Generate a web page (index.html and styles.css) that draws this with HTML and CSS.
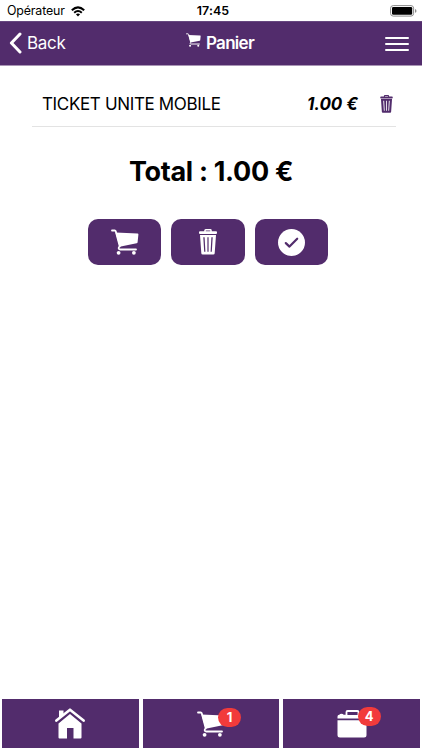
FILE: index.html
```
<!DOCTYPE html>
<html lang="fr">
<head>
<meta charset="utf-8">
<title>Panier</title>
<link rel="stylesheet" href="styles.css">
</head>
<body>
<svg class="defs" aria-hidden="true">
  <symbol id="cart" viewBox="0 0 28 26">
    <path d="M1 1.500h2.700c.6 0 .9.3 1.100.9L8.800 17.500c-1.600.6-1.600 3 .4 3H25" fill="none" stroke="currentColor" stroke-width="1.800" stroke-linecap="round" stroke-linejoin="round"/>
    <path d="M4.500 3.500 26.600 4.600Q27.500 4.700 27.400 5.600L26.600 13.200Q26.500 14.100 25.600 14.300L8.600 17.700Z" fill="currentColor"/>
    <circle cx="7.600" cy="23.800" r="1.900" fill="currentColor"/>
    <circle cx="22.900" cy="23.800" r="1.900" fill="currentColor"/>
  </symbol>
  <symbol id="trash" viewBox="0 0 18 26">
    <path d="M6 3V1.500Q6 .8 6.700.8h4.600q.7 0 .7.700V3" fill="none" stroke="currentColor" stroke-width="1.500"/>
    <rect x="0" y="2.300" width="18" height="2.700" rx="1" fill="currentColor"/>
    <path fill-rule="evenodd" fill="currentColor" d="M1 5.900h16l-1.300 18.300q-.1 1.300-1.400 1.300H3.700q-1.300 0-1.400-1.300ZM4.300 8.300l.9 14.500h1.200L5.600 8.300ZM8.400 8.300v14.500h1.200V8.300ZM12.400 8.300l-.8 14.500h1.200l.9-14.500Z"/>
  </symbol>
</svg>
<div class="screen">
  <div class="status">
    <div class="carrier">
      <span>Opérateur</span>
      <svg class="wifi" viewBox="0 0 14 11">
        <g fill="none" stroke="#000" stroke-width="2">
          <path d="M.8 4.300Q7-1.600 13.200 4.300"/>
          <path d="M3.200 6.800Q7 3.300 10.800 6.800"/>
        </g>
        <path d="M4.900 8.300Q7 6.600 9.100 8.300L7 10.500Z"/>
      </svg>
    </div>
    <div class="clock">17:45</div>
    <svg class="battery" viewBox="0 0 27 12">
      <rect x=".6" y=".6" width="23" height="10.500" rx="2.600" fill="#fff" stroke="#8b8b8b" stroke-width="1"/>
      <rect x="2" y="2" width="20.200" height="7.700" rx="1.300"/>
      <path d="M25 4q1.500.4 1.500 1.900T25 7.800Z" fill="#8b8b8b"/>
    </svg>
  </div>
  <header class="header">
    <div class="back">
      <svg class="chevron" viewBox="0 0 13 22"><path d="M11 2 2.400 11 11 20" fill="none" stroke="currentColor" stroke-width="3" stroke-linecap="round" stroke-linejoin="round"/></svg>
      <span>Back</span>
    </div>
    <h1 class="title"><svg class="title-cart"><use href="#cart"/></svg><span>Panier</span></h1>
    <div class="menu"><i></i><i></i><i></i></div>
  </header>
  <main class="content">
    <div class="item">
      <span class="item-name">TICKET UNITE MOBILE</span>
      <span class="item-price">1.00 €</span>
      <svg class="item-trash"><use href="#trash"/></svg>
    </div>
    <h2 class="total">Total : 1.00 €</h2>
    <div class="actions">
      <div class="button"><svg class="cart"><use href="#cart"/></svg></div>
      <div class="button"><svg class="trash"><use href="#trash"/></svg></div>
      <div class="button"><svg class="check" viewBox="0 0 27 27"><circle cx="13.500" cy="13.500" r="13.500" fill="#fff"/><path d="m7.800 14.100 3.700 3.500 7.700-7.900" fill="none" stroke="#522c6c" stroke-width="2.200" stroke-linecap="round" stroke-linejoin="round"/></svg></div>
    </div>
  </main>
  <nav class="tabs">
    <div class="tab">
      <svg class="home" viewBox="0 0 30 31">
        <path d="M15 6 26.500 15.500V29.500q0 1-1 1H18.500V20h-6.500v10.500H4.500q-1 0-1-1v-14Z" fill="#fff"/>
        <path d="M1.300 14 15 2.700 28.700 14" fill="none" stroke="#522c6c" stroke-width="3.600" stroke-linejoin="round"/>
        <path d="M4 10V2.500h4.500v4Z" fill="#fff"/>
        <path d="M1.400 12.600 15 1.700 28.600 12.600" fill="none" stroke="#fff" stroke-width="2.600" stroke-linecap="round" stroke-linejoin="round"/>
      </svg>
    </div>
    <div class="tab"><div class="icon"><svg class="cart"><use href="#cart"/></svg><span class="badge">1</span></div></div>
    <div class="tab"><div class="icon">
      <svg class="wallet" viewBox="0 0 30 28">
        <path d="M.5 8.600V6.500Q.5 4.700 2.300 4.700 3 3.700 4.500 3.700T6.700 4.700H28q1.500 0 1.500 1.500V8.600ZM.5 10.200h29V25q0 2.500-2.500 2.500H3Q.5 27.500.5 25Z" fill="#fff"/>
        <path d="M9.500 5V2q0-1 1-1H20.500q1 0 1 1V5" fill="#522c6c" stroke="#fff" stroke-width="1.800"/>
      </svg>
      <span class="badge">4</span></div></div>
  </nav>
</div>
</body>
</html>
```
FILE: styles.css
```
* { box-sizing: border-box; }

body {
  margin: 0;
  background: #fff;
  color: #000;
  font-family: Inter, "Liberation Sans", sans-serif;
}

svg { display: block; flex: none; }

.defs { position: absolute; width: 0; height: 0; }

.screen {
  width: 422px;
  height: 750px;
  display: flex;
  flex-direction: column;
}

.status {
  height: 21px;
  display: grid;
  grid-template-columns: 1fr auto 1fr;
  align-items: center;
  padding: 1px 5px 0 7px;
  font-size: 12.400px;
  line-height: 20px;
}

.carrier { display: flex; align-items: center; gap: 6px; letter-spacing: -0.15px; }
.wifi { width: 14px; height: 11px; }
.clock { font-weight: 600; padding-left: 2px; letter-spacing: 0.1px; }
.battery { width: 27px; height: 12px; justify-self: end; }

.header {
  height: 45px;
  display: grid;
  grid-template-columns: 1fr auto 1fr;
  align-items: center;
  padding: 0 13px 2px 9px;
  background: #522c6c;
  border-top: 1px solid #674780;
  border-bottom: 1px solid #a995b5;
  color: #fff;
}

.back { display: flex; align-items: center; gap: 5px; font-size: 17px; letter-spacing: -0.3px; }
.chevron { width: 13px; height: 22px; }

.title {
  display: flex;
  align-items: center;
  gap: 5px;
  margin: 0;
  padding-left: 22px;
  font-size: 17px;
  font-weight: 600;
  letter-spacing: -0.7px;
}
.title-cart { width: 15px; height: 14px; margin-top: -5px; }

.menu { display: grid; gap: 4px; width: 24px; margin-top: 2px; justify-self: end; }
.menu i { height: 2px; border-radius: 1px; background: #fff; }

.content { flex: 1; }

.item {
  width: 364px;
  height: 61px;
  margin-left: 32px;
  padding: 15px 3px 0 10px;
  display: flex;
  align-items: center;
  border-bottom: 1px solid #e3e3e3;
  font-size: 17px;
}
.item-name { flex: 1; letter-spacing: -0.35px; }
.item-price { font-weight: 700; font-style: italic; }
.item-trash { width: 13px; height: 18px; margin-left: 22px; color: #522c6c; }

.total {
  margin: 28px 0 0;
  text-align: center;
  font-size: 27px;
  line-height: 34px;
  font-weight: 700;
  letter-spacing: -0.3px;
}

.actions { display: flex; gap: 10px; margin: 30px 0 0 88px; }
.button {
  width: 73.300px;
  height: 46px;
  display: grid;
  place-items: center;
  border-radius: 10px;
  background: #522c6c;
  color: #fff;
}
.cart { width: 28px; height: 26px; }
.trash { width: 18px; height: 26px; }
.check { width: 27px; height: 27px; }

.tabs {
  height: 51px;
  padding: 0 2px 2px;
  display: grid;
  grid-template-columns: repeat(3, 1fr);
  gap: 4px;
}
.tab { display: grid; place-items: center; background: #522c6c; color: #fff; }
.home { width: 30px; height: 31px; }
.icon { position: relative; }
.wallet { width: 30px; height: 28px; }

.badge {
  position: absolute;
  left: 21px;
  top: -3px;
  width: 23px;
  height: 19px;
  border-radius: 10px;
  background: #f23b3b;
  font-size: 13px;
  font-weight: 700;
  line-height: 19px;
  text-align: center;
}
```
